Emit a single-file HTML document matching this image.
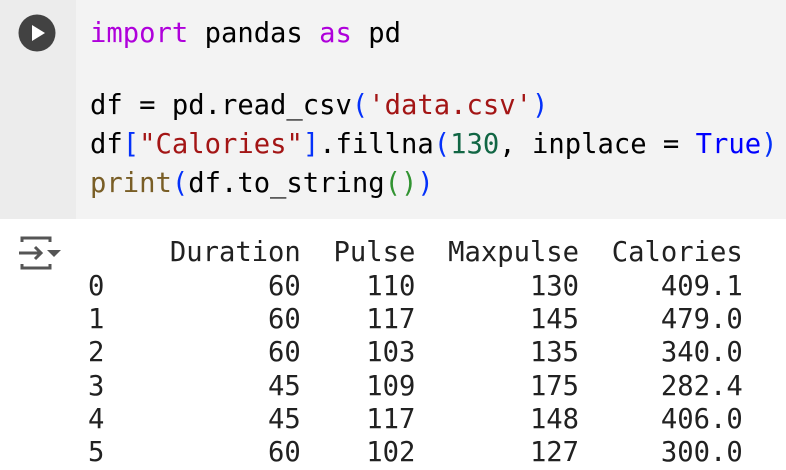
<!DOCTYPE html>
<html><head><style>
body{margin:0;width:786px;height:460px;overflow:hidden;background:#fff;font-family:"DejaVu Sans Mono","Liberation Mono",monospace;font-size:27.2px;}
.gut{position:absolute;left:0;top:0;width:76px;height:219px;background:#ececec;}
.code{position:absolute;left:76px;top:0;width:710px;height:219px;background:#f3f3f3;}
.l{position:absolute;left:90px;height:34px;line-height:34px;white-space:pre;color:#000;}
.k{color:#af00db}.s{color:#a31515}.n{color:#116644}.t{color:#0000ff}.b{color:#0431fa}.f{color:#795e26}.g{color:#319331}
.o{position:absolute;left:88px;height:34px;line-height:34px;white-space:pre;color:#212121;}
</style></head><body>
<div class="gut"></div><div class="code"></div>
<svg style="position:absolute;left:18px;top:14px" width="38" height="38" viewBox="0 0 38 38"><circle cx="19" cy="19" r="18.5" fill="#424242"/><path d="M14 11 L27 19 L14 27 Z" fill="#fff"/></svg>
<div class="l" style="top:17px"><span class="k">import</span> pandas <span class="k">as</span> pd</div>
<div class="l" style="top:89px">df = pd.read_csv<span class="b">(</span><span class="s">'data.csv'</span><span class="b">)</span></div>
<div class="l" style="top:128px">df<span class="b">[</span><span class="s">"Calories"</span><span class="b">]</span>.fillna<span class="b">(</span><span class="n">130</span>, inplace = <span class="t">True</span><span class="b">)</span></div>
<div class="l" style="top:167px"><span class="f">print</span><span class="b">(</span>df.to_string<span class="g">()</span><span class="b">)</span></div>
<svg style="position:absolute;left:17px;top:235px" width="46" height="36" viewBox="0 0 46 36"><g fill="none" stroke="#555" stroke-width="3"><path d="M5 7 V3 H33 V7"/><path d="M5 29 V33 H33 V29"/><path d="M2 18 H24"/><path d="M18 12 L24 18 L18 24"/></g><path d="M30 15 H44 L37 22 Z" fill="#555"/></svg>
<div class="o" style="top:236px">     Duration  Pulse  Maxpulse  Calories</div>
<div class="o" style="top:270px">0          60    110       130     409.1</div>
<div class="o" style="top:303px">1          60    117       145     479.0</div>
<div class="o" style="top:336px">2          60    103       135     340.0</div>
<div class="o" style="top:370px">3          45    109       175     282.4</div>
<div class="o" style="top:403px">4          45    117       148     406.0</div>
<div class="o" style="top:436px">5          60    102       127     300.0</div>
</body></html>
